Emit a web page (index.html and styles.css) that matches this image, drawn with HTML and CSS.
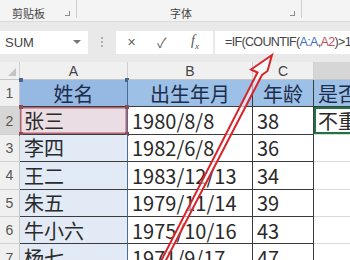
FILE: index.html
```html
<!DOCTYPE html>
<html lang="zh-CN">
<head>
  <meta charset="UTF-8" />
  <title>COUNTIF 查重</title>
  <link rel="stylesheet" href="styles.css">
</head>
<body>

  <div class="ribbon">
    <div class="group clip"><span class="group-label">剪贴板</span><span class="launcher"></span></div>
    <div class="group font"><span class="group-label">字体</span><span class="launcher"></span></div>
  </div>

  <div class="formula-bar">
    <div class="name-box"><span>SUM</span><span class="drop"></span></div>
    <div class="grip"><i></i><i></i><i></i></div>
    <div class="fx-buttons">
      <span class="btn-x">✕</span>
      <span class="btn-ok">✓</span>
      <span class="btn-fx"><i>f</i><sub>x</sub></span>
    </div>
    <div class="formula-input">=IF(COUNTIF(<span class="ref-a">A:A</span>,<span class="ref-b">A2</span>)&gt;1,"重复","不重复")</div>
  </div>

  <div class="sheet">
    <!-- column headers -->
    <div class="corner"><span class="tri"></span></div>
    <div class="col-head">A</div>
    <div class="col-head">B</div>
    <div class="col-head">C</div>
    <div class="col-head sel">D</div>

    <!-- row 1 -->
    <div class="row-head">1</div>
    <div class="cell col-a title">姓名<span class="h tl"></span><span class="h tr"></span></div>
    <div class="cell title">出生年月</div>
    <div class="cell title">年龄</div>
    <div class="cell col-d title left">是否重复</div>

    <!-- row 2 -->
    <div class="row-head sel">2</div>
    <div class="cell col-a ref">张三<span class="h tl"></span><span class="h tr"></span><span class="h bl"></span><span class="h br"></span></div>
    <div class="cell">1980/8/8</div>
    <div class="cell">38</div>
    <div class="cell col-d active">不重复</div>

    <div class="row-head">3</div>
    <div class="cell col-a">李四</div>
    <div class="cell">1982/6/8</div>
    <div class="cell">36</div>
    <div class="cell col-d"></div>

    <div class="row-head">4</div>
    <div class="cell col-a">王二</div>
    <div class="cell">1983/12/13</div>
    <div class="cell">34</div>
    <div class="cell col-d"></div>

    <div class="row-head">5</div>
    <div class="cell col-a">朱五</div>
    <div class="cell">1979/11/14</div>
    <div class="cell">39</div>
    <div class="cell col-d"></div>

    <div class="row-head">6</div>
    <div class="cell col-a">牛小六</div>
    <div class="cell">1975/10/16</div>
    <div class="cell">43</div>
    <div class="cell col-d"></div>

    <div class="row-head">7</div>
    <div class="cell col-a">杨七</div>
    <div class="cell">1971/9/17</div>
    <div class="cell">47</div>
    <div class="cell col-d"></div>
  </div>

  <!-- hand-drawn arrow pointing at the formula -->
  <svg class="arrow" width="350" height="260" viewBox="0 0 350 260">
    <polygon points="272,55 251,69.5 257.5,72.5 160,263 164.5,263 262,75 267.5,71"
             fill="rgba(255,255,255,0.55)" stroke="#d8252b" stroke-width="2" stroke-linejoin="miter" />
  </svg>

</body>
</html>
```

FILE: styles.css
```css
body {
  margin: 0;
  width: 350px;
  height: 260px;
  overflow: hidden;
  position: relative;
  background: #ffffff;
  font-family: "Noto Sans CJK SC", "Liberation Sans", sans-serif;
}

/* ribbon strip */
.ribbon {
  display: flex;
  height: 21px;
  background: #f4f4f4;
  border-bottom: 1px solid #dadada;
}

.group {
  display: flex;
  align-items: center;
  box-sizing: border-box;
  height: 18px;
  border-right: 1px solid #d0d0d0;
  font-size: 11px;
  color: #444;
}

.group.clip {
  width: 77px;
  padding-left: 12px;
}

.group.font {
  width: 225px;
  padding-left: 93px;
}

.group-label {
  margin-top: 7px;
}

.launcher {
  width: 4px;
  height: 4px;
  margin-left: auto;
  margin-right: 6px;
  margin-top: 9px;
  border-right: 1px solid #8a8a8a;
  border-bottom: 1px solid #8a8a8a;
}

/* formula bar */
.formula-bar {
  display: flex;
  align-items: center;
  height: 40px;
  background: #e9e9e9;
  font-family: "Liberation Sans", sans-serif;
}

.name-box {
  display: flex;
  align-items: center;
  width: 88px;
  height: 23px;
  box-sizing: border-box;
  padding: 0 5px;
  background: #fff;
  font-size: 13px;
  color: #444;
}

.drop {
  margin-left: auto;
  margin-right: 2px;
  border-left: 4px solid transparent;
  border-right: 4px solid transparent;
  border-top: 4px solid #777;
}

.grip {
  display: flex;
  flex-direction: column;
  align-items: center;
  gap: 2px;
  width: 28px;
}

.grip i {
  width: 2px;
  height: 2px;
  background: #b0b0b0;
}

.fx-buttons {
  display: flex;
  align-items: center;
  width: 97px;
  height: 23px;
  box-sizing: border-box;
  padding-left: 11px;
  background: #fff;
  color: #666;
}

.btn-x {
  font-size: 11px;
  width: 30px;
}

.btn-ok {
  font-size: 14px;
  width: 34px;
}

.btn-fx {
  font-family: "Liberation Serif", serif;
  font-size: 14px;
  color: #555;
}

.btn-fx sub {
  font-size: 9px;
  font-style: italic;
}

.formula-input {
  flex: 1;
  margin-left: 2px;
  height: 23px;
  line-height: 23px;
  padding-left: 10px;
  background: #fff;
  font-size: 12.5px;
  letter-spacing: -0.65px;
  color: #444;
  white-space: nowrap;
  overflow: hidden;
}

.ref-a {
  color: #3f6fb8;
}

.ref-b {
  color: #c0505a;
}

/* worksheet */
.sheet {
  display: grid;
  grid-template-columns: 20px 108px 125px 61px 100px;
  grid-template-rows: 18px repeat(7, 27.4px);
}

.corner {
  display: flex;
  align-items: flex-end;
  justify-content: flex-end;
  padding: 0 3px 3px 0;
  background: #f0f0f0;
  border-right: 1px solid #cfcfcf;
  border-bottom: 1px solid #c6c6c6;
}

.tri {
  width: 0;
  height: 0;
  border-left: 8px solid transparent;
  border-bottom: 8px solid #c4c4c4;
}

.col-head {
  display: flex;
  align-items: center;
  justify-content: center;
  background: #f0f0f0;
  border-right: 1px solid #d0d0d0;
  border-bottom: 1px solid #c6c6c6;
  font-family: "Liberation Sans", sans-serif;
  font-size: 14px;
  color: #444;
}

.col-head.sel {
  background: #d6d6d6;
}

.row-head {
  display: flex;
  align-items: center;
  justify-content: center;
  background: #f0f0f0;
  border-right: 1px solid #c6c6c6;
  border-bottom: 1px solid #d0d0d0;
  font-family: "Liberation Sans", sans-serif;
  font-size: 14px;
  color: #555;
}

.row-head.sel {
  background: #d6d6d6;
}

.cell {
  position: relative;
  display: flex;
  align-items: center;
  padding-left: 4px;
  box-sizing: border-box;
  border-right: 1px solid #3c3c3c;
  border-bottom: 1px solid #3c3c3c;
  font-size: 20px;
  color: #2a2a2a;
  white-space: nowrap;
  overflow: hidden;
}

.cell.title {
  justify-content: center;
  padding-left: 0;
  background: #9cc0e6;
  color: #1d2e4c;
}

.cell.title.left {
  justify-content: flex-start;
  padding-left: 4px;
}

.cell.col-a {
  overflow: visible;
  background: #e2eaf5;
  border-right-color: #4d6c94;
}

.cell.col-a.title {
  background: #95b9e2;
}

.cell.col-a.ref {
  background: #eadde3;
  box-shadow: inset 0 0 0 1.5px #b5626f;
}

.cell.col-d {
  border-right: none;
  border-bottom-color: #dadada;
}

.cell.col-d.title {
  border-bottom-color: #3c3c3c;
}

.cell.active {
  box-shadow: inset 0 0 0 2px #217346;
}

/* range handles */
.h {
  position: absolute;
  width: 4px;
  height: 4px;
  background: #8d4b57;
}

.title .h {
  background: #46678f;
}

.h.tl { left: -1px; top: -2px; }
.h.tr { right: -2px; top: -2px; }
.h.bl { left: -1px; bottom: -2px; }
.h.br { right: -2px; bottom: -2px; }

.arrow {
  position: absolute;
  left: 0;
  top: 0;
  pointer-events: none;
}
```
